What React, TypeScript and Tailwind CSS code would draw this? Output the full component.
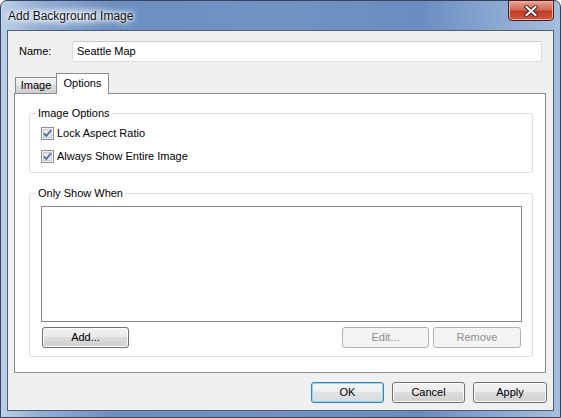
import React from "react";

const font = "font-['Liberation_Sans',Arial,sans-serif]";

type BtnProps = {
  label: string;
  w: string;
  kind?: "normal" | "default" | "disabled";
};

const Btn = ({ label, w, kind = "normal" }: BtnProps) => {
  const base = "h-[21px] rounded-[3px] border flex items-center justify-center text-[11px] leading-none";
  if (kind === "disabled") {
    return (
      <div className={`${base} ${w} border-[#adb2b5] bg-[#f4f4f4] text-[#8d8d8d]`}>{label}</div>
    );
  }
  if (kind === "default") {
    return (
      <div
        className={`${base} ${w} border-[#3c7fb1] text-black bg-[linear-gradient(#f4f7f9,#eceff1_45%,#e1e4e6_50%,#d8dbdd)] shadow-[inset_0_0_0_1px_#8fdcf7]`}
      >
        {label}
      </div>
    );
  }
  return (
    <div
      className={`${base} ${w} border-[#707070] text-black bg-[linear-gradient(#f2f2f2,#ebebeb_45%,#dddddd_50%,#cfcfcf)] shadow-[inset_0_0_0_1px_#fbfbfb]`}
    >
      {label}
    </div>
  );
};

const Check = ({ label }: { label: string }) => (
  <div className="h-[13px] flex items-center gap-[3px]">
    <svg width="13" height="13" viewBox="0 0 13 13">
      <rect x="0.5" y="0.5" width="12" height="12" fill="#f4f4f4" stroke="#8e8f8f" />
      <rect x="2.5" y="2.5" width="8" height="8" fill="#e6e8ea" stroke="#c6c8cc" />
      <path d="M3 6.5 L5.3 9 L10 3.2" fill="none" stroke="#4b63a0" strokeWidth="1.7" />
    </svg>
    <span className="text-[11px] leading-[13px] text-black">{label}</span>
  </div>
);

const App = () => {
  return (
    <div
      className={`${font} w-[561px] h-[418px] rounded-t-[7px] border border-[#34465e] bg-[linear-gradient(90deg,#bdd0e8_0%,#93afd6_7%,#6c8fc2_20%,#7093c4_50%,#6a8dc1_75%,#a6bede_100%)] flex flex-col`}
    >
      {/* title bar */}
      <div className="h-[29px] flex items-start justify-between">
        <div className="ml-[3px] mt-[4px] px-[4px] py-[4px] rounded-full bg-[radial-gradient(closest-side,rgba(255,255,255,0.55),rgba(255,255,255,0))] text-[12px] leading-[14px] text-[#111] [text-shadow:0_0_6px_#fff,0_0_10px_#fff,0_0_3px_#fff]">
          Add Background Image
        </div>
        <div className="mr-[6px] -mt-px w-[46px] h-[21px] rounded-b-[4px] border border-[#4a1c18] bg-[linear-gradient(#e9a597,#d46a55_45%,#c13b23_55%,#cf5a3f)] shadow-[inset_0_0_0_1px_#eab2a8] flex items-center justify-center">
          <svg width="14" height="12" viewBox="0 0 14 12">
            <path d="M2.5 2 L11.5 10 M11.5 2 L2.5 10" stroke="#3b2a2a" strokeWidth="4" strokeLinecap="square" />
            <path d="M2.5 2 L11.5 10 M11.5 2 L2.5 10" stroke="#ffffff" strokeWidth="2" strokeLinecap="square" />
          </svg>
        </div>
      </div>

      {/* client area */}
      <div className="mx-[6px] mb-[6px] flex-1 border border-[#4d5e75] bg-[#f0f0f0] flex flex-col">
        {/* name row */}
        <div className="mt-[10px] flex items-center">
          <span className="ml-[11px] w-[53px] text-[11px] text-black">Name:</span>
          <div className="w-[470px] h-[21px] rounded-[2px] border border-[#dcdcdc] border-t-[#c8c8c8] bg-white flex items-center pl-[4px] text-[11px] text-black">
            Seattle Map
          </div>
        </div>

        {/* tabs */}
        <div className="mt-[11px] ml-[6px] w-[532px]">
          <div className="h-[20px] flex items-end">
            <div className="ml-px w-[42px] h-[16px] border border-b-0 border-[#898c95] bg-[linear-gradient(#f2f2f2,#ebebeb_50%,#dddddd_50%,#cfcfcf)] flex items-center justify-center text-[11px] text-black">
              Image
            </div>
            <div className="relative z-10 -ml-px -mb-px w-[53px] h-[21px] border border-b-0 border-[#898c95] bg-white flex items-center justify-center text-[11px] text-black pb-[1px]">
              Options
            </div>
          </div>

          <div className="h-[280px] border border-[#898c95] bg-white flex flex-col">
            {/* Image Options */}
            <fieldset className="mt-[13px] ml-[14px] w-[504px] h-[66px] rounded-[3px] border border-[#d5dfe5]">
              <legend className="ml-[6px] px-[2px] text-[11px] leading-[13px] text-black">Image Options</legend>
              <div className="pl-[11px] pt-[7px] flex flex-col gap-[10px]">
                <Check label="Lock Aspect Ratio" />
                <Check label="Always Show Entire Image" />
              </div>
            </fieldset>

            {/* Only Show When */}
            <fieldset className="mt-[14px] ml-[14px] w-[504px] h-[170px] rounded-[3px] border border-[#d5dfe5]">
              <legend className="ml-[6px] px-[2px] text-[11px] leading-[13px] text-black">Only Show When</legend>
              <div className="mt-[6px] ml-[11px] w-[481px] h-[116px] border border-[#828790] bg-white" />
              <div className="mt-[5px] ml-[12px] mr-[11px] flex justify-between">
                <Btn label="Add..." w="w-[87px]" />
                <div className="flex gap-[4px]">
                  <Btn label="Edit..." w="w-[87px]" kind="disabled" />
                  <Btn label="Remove" w="w-[88px]" kind="disabled" />
                </div>
              </div>
            </fieldset>
          </div>
        </div>

        {/* dialog buttons */}
        <div className="mt-[9px] mr-[6px] flex justify-end gap-[8px]">
          <Btn label="OK" w="w-[73px]" kind="default" />
          <Btn label="Cancel" w="w-[73px]" />
          <Btn label="Apply" w="w-[74px]" />
        </div>
      </div>
    </div>
  );
};

export default App;
